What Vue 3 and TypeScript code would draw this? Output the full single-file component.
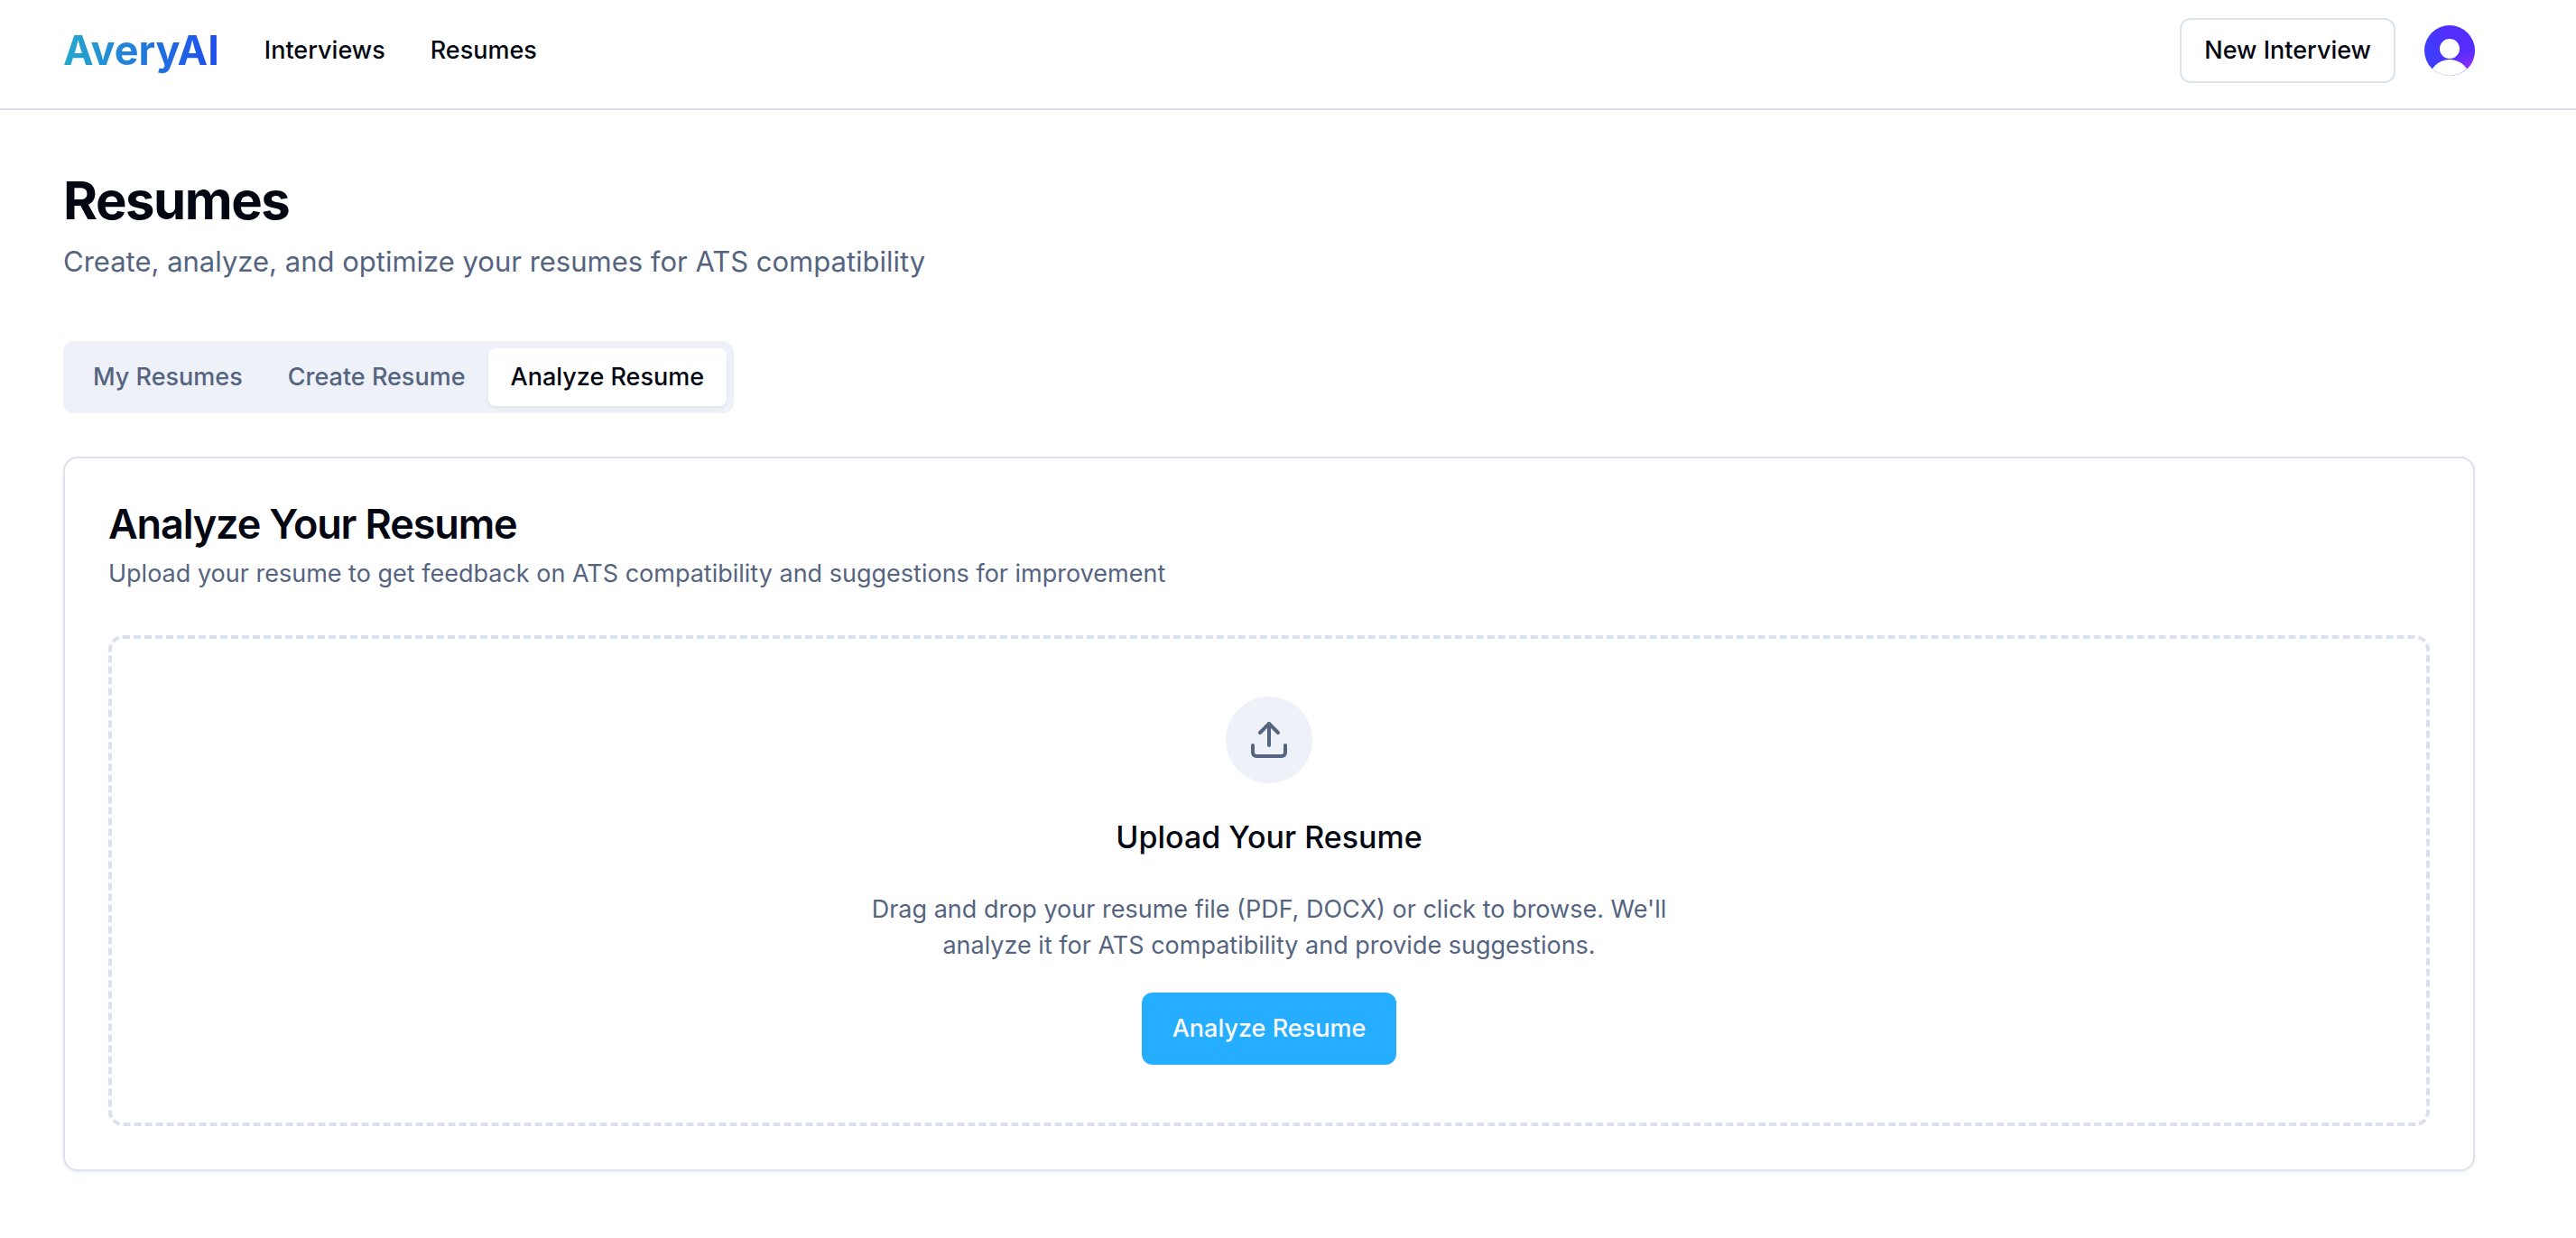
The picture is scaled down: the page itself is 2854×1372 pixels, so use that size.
<script setup lang="ts">
import { ref } from 'vue'

const navLinks: string[] = ['Interviews', 'Resumes']
const tabs: string[] = ['My Resumes', 'Create Resume', 'Analyze Resume']
const activeTab = ref<string>('Analyze Resume')
</script>

<template>
  <div class="page">
    <header class="topbar">
      <nav class="nav" aria-label="Main">
        <a class="brand" href="#">AveryAI</a>
        <a v-for="link in navLinks" :key="link" class="nav-link" href="#">{{ link }}</a>
      </nav>
      <div class="actions">
        <button type="button" class="btn btn-outline">New Interview</button>
        <button type="button" class="avatar" aria-label="Account">
          <svg viewBox="0 0 56 56" width="56" height="56" aria-hidden="true">
            <defs>
              <linearGradient id="avatar-base" x1="0" y1="0.6" x2="0.6" y2="0.4">
                <stop offset="0" stop-color="#3b3fff" />
                <stop offset="0.3" stop-color="#413aff" />
                <stop offset="1" stop-color="#552dff" />
              </linearGradient>
              <radialGradient id="avatar-glow" cx="0.92" cy="0.88" r="0.48">
                <stop offset="0" stop-color="#9a2cf5" />
                <stop offset="0.4" stop-color="#842cfa" stop-opacity="0.85" />
                <stop offset="1" stop-color="#552dff" stop-opacity="0" />
              </radialGradient>
              <clipPath id="avatar-clip"><circle cx="28" cy="28" r="28" /></clipPath>
            </defs>
            <g clip-path="url(#avatar-clip)">
              <rect width="56" height="56" fill="url(#avatar-base)" />
              <rect width="56" height="56" fill="url(#avatar-glow)" />
              <circle cx="28" cy="26" r="11" fill="#fff" />
              <circle cx="28" cy="61" r="23" fill="#fff" />
            </g>
          </svg>
        </button>
      </div>
    </header>

    <main class="content">
      <h1 class="title">Resumes</h1>
      <p class="subtitle">Create, analyze, and optimize your resumes for ATS compatibility</p>

      <div class="tabs" role="tablist">
        <button
          v-for="tab in tabs"
          :key="tab"
          type="button"
          role="tab"
          class="tab"
          :class="{ active: tab === activeTab }"
          :aria-selected="tab === activeTab"
          @click="activeTab = tab"
        >
          {{ tab }}
        </button>
      </div>

      <section class="card">
        <h2 class="card-title">Analyze Your Resume</h2>
        <p class="card-text">
          Upload your resume to get feedback on ATS compatibility and suggestions for improvement
        </p>

        <div class="dropzone">
          <div class="upload-icon">
            <svg
              viewBox="0 0 24 24"
              width="48"
              height="48"
              fill="none"
              stroke="currentColor"
              stroke-width="2"
              stroke-linecap="round"
              stroke-linejoin="round"
              aria-hidden="true"
            >
              <path d="M21 15v4a2 2 0 0 1-2 2H5a2 2 0 0 1-2-2v-4" />
              <path d="M17 8l-5-5-5 5" />
              <path d="M12 3v12" />
            </svg>
          </div>
          <h3 class="drop-title">Upload Your Resume</h3>
          <p class="drop-text">
            Drag and drop your resume file (PDF, DOCX) or click to browse. We'll analyze it for ATS
            compatibility and provide suggestions.
          </p>
          <button type="button" class="btn btn-primary">Analyze Resume</button>
        </div>
      </section>
    </main>
  </div>
</template>

<style>
body {
  margin: 0;
  background: #fff;
}
</style>

<style scoped>
.page {
  font-family: Inter, 'Liberation Sans', sans-serif;
  font-size: 27px;
  line-height: 40px;
  color: #030711;
}

h1,
h2,
h3,
p {
  margin: 0;
}

a {
  color: inherit;
  text-decoration: none;
}

button {
  font: inherit;
  font-weight: 500;
  color: inherit;
  cursor: pointer;
}

.topbar {
  display: flex;
  justify-content: space-between;
  align-items: center;
  padding: 20px 112px 28px 70px;
  border-bottom: 2px solid #dce1ef;
}

.nav {
  display: flex;
  align-items: center;
  gap: 50px;
}

.brand {
  font-size: 45px;
  line-height: 64px;
  font-weight: 700;
  background: linear-gradient(to right, #26a9cb, #1d4ced);
  background-clip: text;
  color: transparent;
}

.nav-link {
  font-weight: 500;
}

.actions {
  display: flex;
  align-items: center;
  gap: 32px;
}

.btn {
  border-radius: 12px;
}

.btn-outline {
  padding: 14px 25px;
  background: #fff;
  border: 2px solid #dce3ef;
}

.btn-primary {
  padding: 20px 34px;
  background: #25adff;
  border: 0;
  color: #f8fafc;
}

.avatar {
  display: flex;
  padding: 0;
  border: 0;
  background: none;
  border-radius: 50%;
}

.content {
  padding: 64px 112px 64px 70px;
}

.title {
  font-size: 58px;
  line-height: 72px;
  font-weight: 700;
  letter-spacing: -0.025em;
}

.subtitle {
  margin-top: 4px;
  font-size: 31px;
  line-height: 56px;
  color: #55647f;
}

.tabs {
  display: inline-flex;
  margin-top: 60px;
  padding: 8px;
  background: #eef1f8;
  border-radius: 12px;
}

.tab {
  padding: 12px 25px;
  border: 0;
  border-radius: 8px;
  background: none;
  color: #55647f;
}

.tab.active {
  background: #fff;
  color: #030711;
  box-shadow: 0 2px 4px rgba(0, 0, 0, 0.05);
}

.card {
  margin-top: 48px;
  padding: 48px;
  border: 2px solid #dce1ef;
  border-radius: 16px;
  background: #fff;
  box-shadow: 0 2px 4px rgba(0, 0, 0, 0.05);
}

.card-title {
  font-size: 45px;
  line-height: 50px;
  font-weight: 600;
  letter-spacing: -0.025em;
}

.card-text {
  margin-top: 10px;
  color: #55647f;
}

.dropzone {
  display: flex;
  flex-direction: column;
  align-items: center;
  margin-top: 48px;
  padding: 64px;
  border: 4px dashed #dae0ed;
  border-radius: 16px;
}

.upload-icon {
  display: flex;
  padding: 24px;
  border-radius: 50%;
  background: #eef1f8;
  color: #55647f;
}

.drop-title {
  margin-top: 32px;
  font-size: 34px;
  line-height: 56px;
  font-weight: 500;
}

.drop-text {
  max-width: 896px;
  margin: 32px 0;
  text-align: center;
  color: #55647f;
}
</style>
